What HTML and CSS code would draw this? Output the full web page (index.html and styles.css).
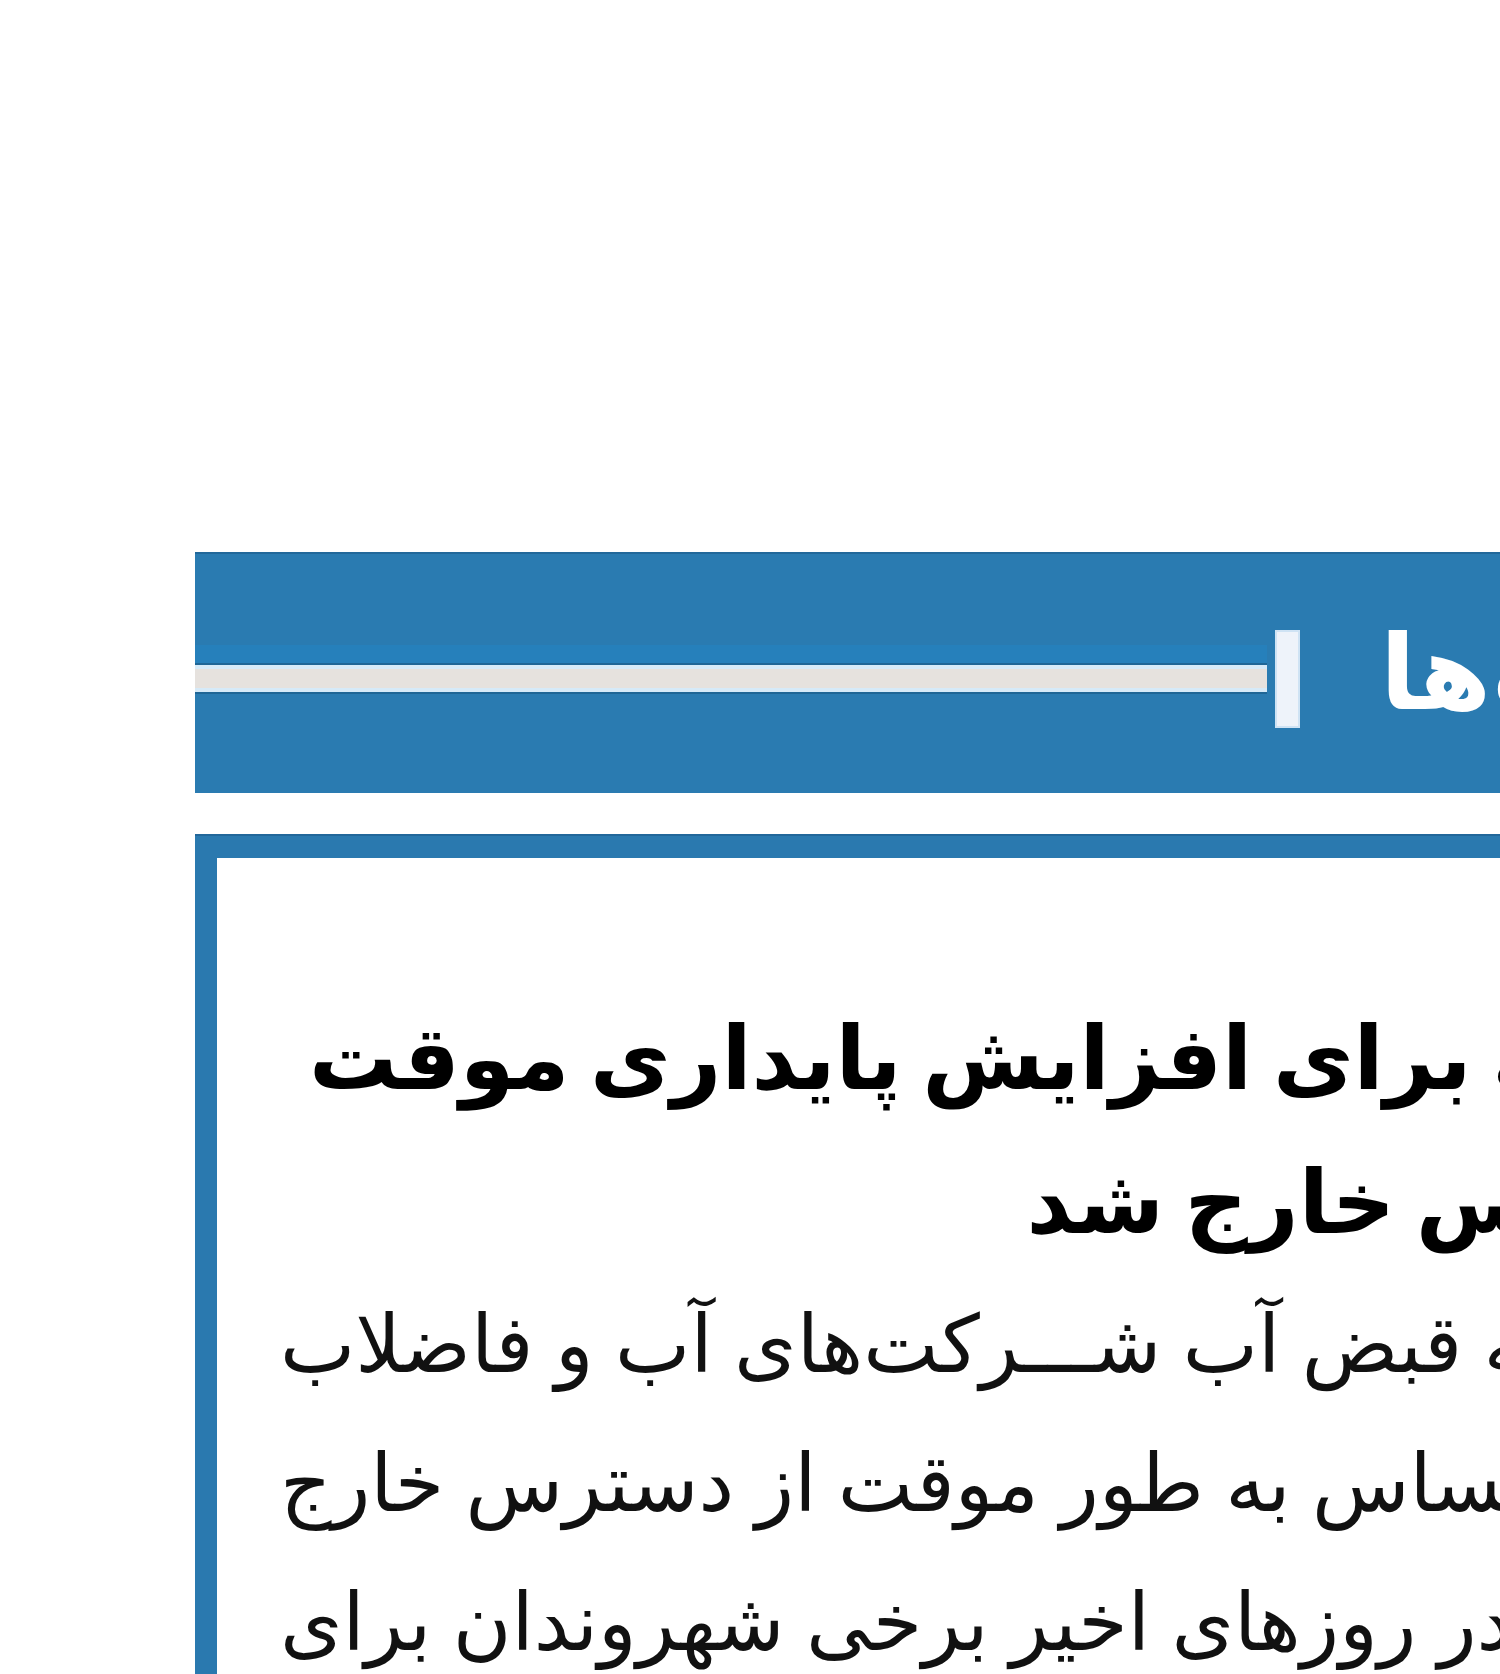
FILE: index.html
```html
<!DOCTYPE html>
<html lang="fa">
<head>
    <meta charset="UTF-8">
    <meta name="viewport" content="width=device-width, initial-scale=1.0">
    <title>یادداشت‌ها</title>
    <link rel="stylesheet" href="styles.css">
</head>
<body>
    <div class="page">
        <div class="section-head">
            <h2 class="section-title">یادداشت‌ها</h2>
            <span class="title-bar"></span>
            <span class="title-rule"></span>
        </div>

        <div class="news-box">
            <h1 class="news-title">
                <span>و سامانه برای افزایش پایداری موقت</span>
                <span>از دسترس خارج شد</span>
            </h1>
            <div class="news-lead">
                <span>به گزارش خبرنگار ما، سامانه قبض آب شـــرکت‌های آب و فاضلاب</span>
                <span>کشور برای افزایش پایداری سامانه‌های حساس به طور موقت از دسترس خارج</span>
                <span>شد. در روزهای اخیر برخی شهروندان برای</span>
            </div>
        </div>
    </div>
</body>
</html>
```

FILE: styles.css
```css
html, body {
    margin: 0;
    overflow: hidden;
    background-color: #ffffff;
}

.page {
    width: 2600px;
    height: 1674px;
    padding: 552px 0 0 195px;
    box-sizing: border-box;
}

/* سرتیتر بخش: عنوان، خط عمودی و نوار افقی */
.section-head {
    direction: rtl;
    display: flex;
    align-items: center;
    justify-content: flex-end;
    height: 241px;
    background-color: #2a7bb1;
    box-shadow: inset 0 2px 0 #22689a;
}

.section-title {
    margin: 0 0 0 82px;
    color: #ffffff;
    font-family: "DejaVu Sans", sans-serif;
    font-size: 104px;
    font-weight: bold;
    line-height: 1;
    white-space: nowrap;
}

.title-bar {
    width: 21px;
    height: 94px;
    margin-top: 12px;
    margin-left: 10px;
    background-color: #eef3fa;
    box-shadow: 0 0 0 2px #cfe3f4;
}

.title-rule {
    flex: 0 0 1072px;
    height: 19px;
    margin-top: 12px;
    background-color: #e6e2de;
    border-top: 4px solid #d6eaf8;
    border-bottom: 4px solid #d6eaf8;
    box-shadow: 0 -2px 0 #1f6696, 0 2px 0 #1f6696, 0 -20px 0 #2680bb;
}

/* کادر خبر */
.news-box {
    margin-top: 43px;
    min-height: 900px;
    padding: 129px 0 0 63px;
    background-color: #ffffff;
    border-top: 22px solid #2a79af;
    border-left: 22px solid #2a79af;
    box-shadow: 0 -2px 0 #22679a;
}

.news-title {
    direction: rtl;
    width: max-content;
    margin: 0 0 0 29px;
    color: #000000;
    font-family: "DejaVu Sans", sans-serif;
    font-size: 88px;
    font-weight: bold;
    line-height: 144px;
    word-spacing: -10px;
    text-align: right;
    white-space: nowrap;
}

.news-title span,
.news-lead span {
    display: block;
}

.news-lead {
    direction: rtl;
    width: max-content;
    color: #111111;
    font-family: "DejaVu Sans", sans-serif;
    font-size: 80px;
    line-height: 139px;
    word-spacing: -4px;
    text-align: left;
    white-space: nowrap;
}
```
